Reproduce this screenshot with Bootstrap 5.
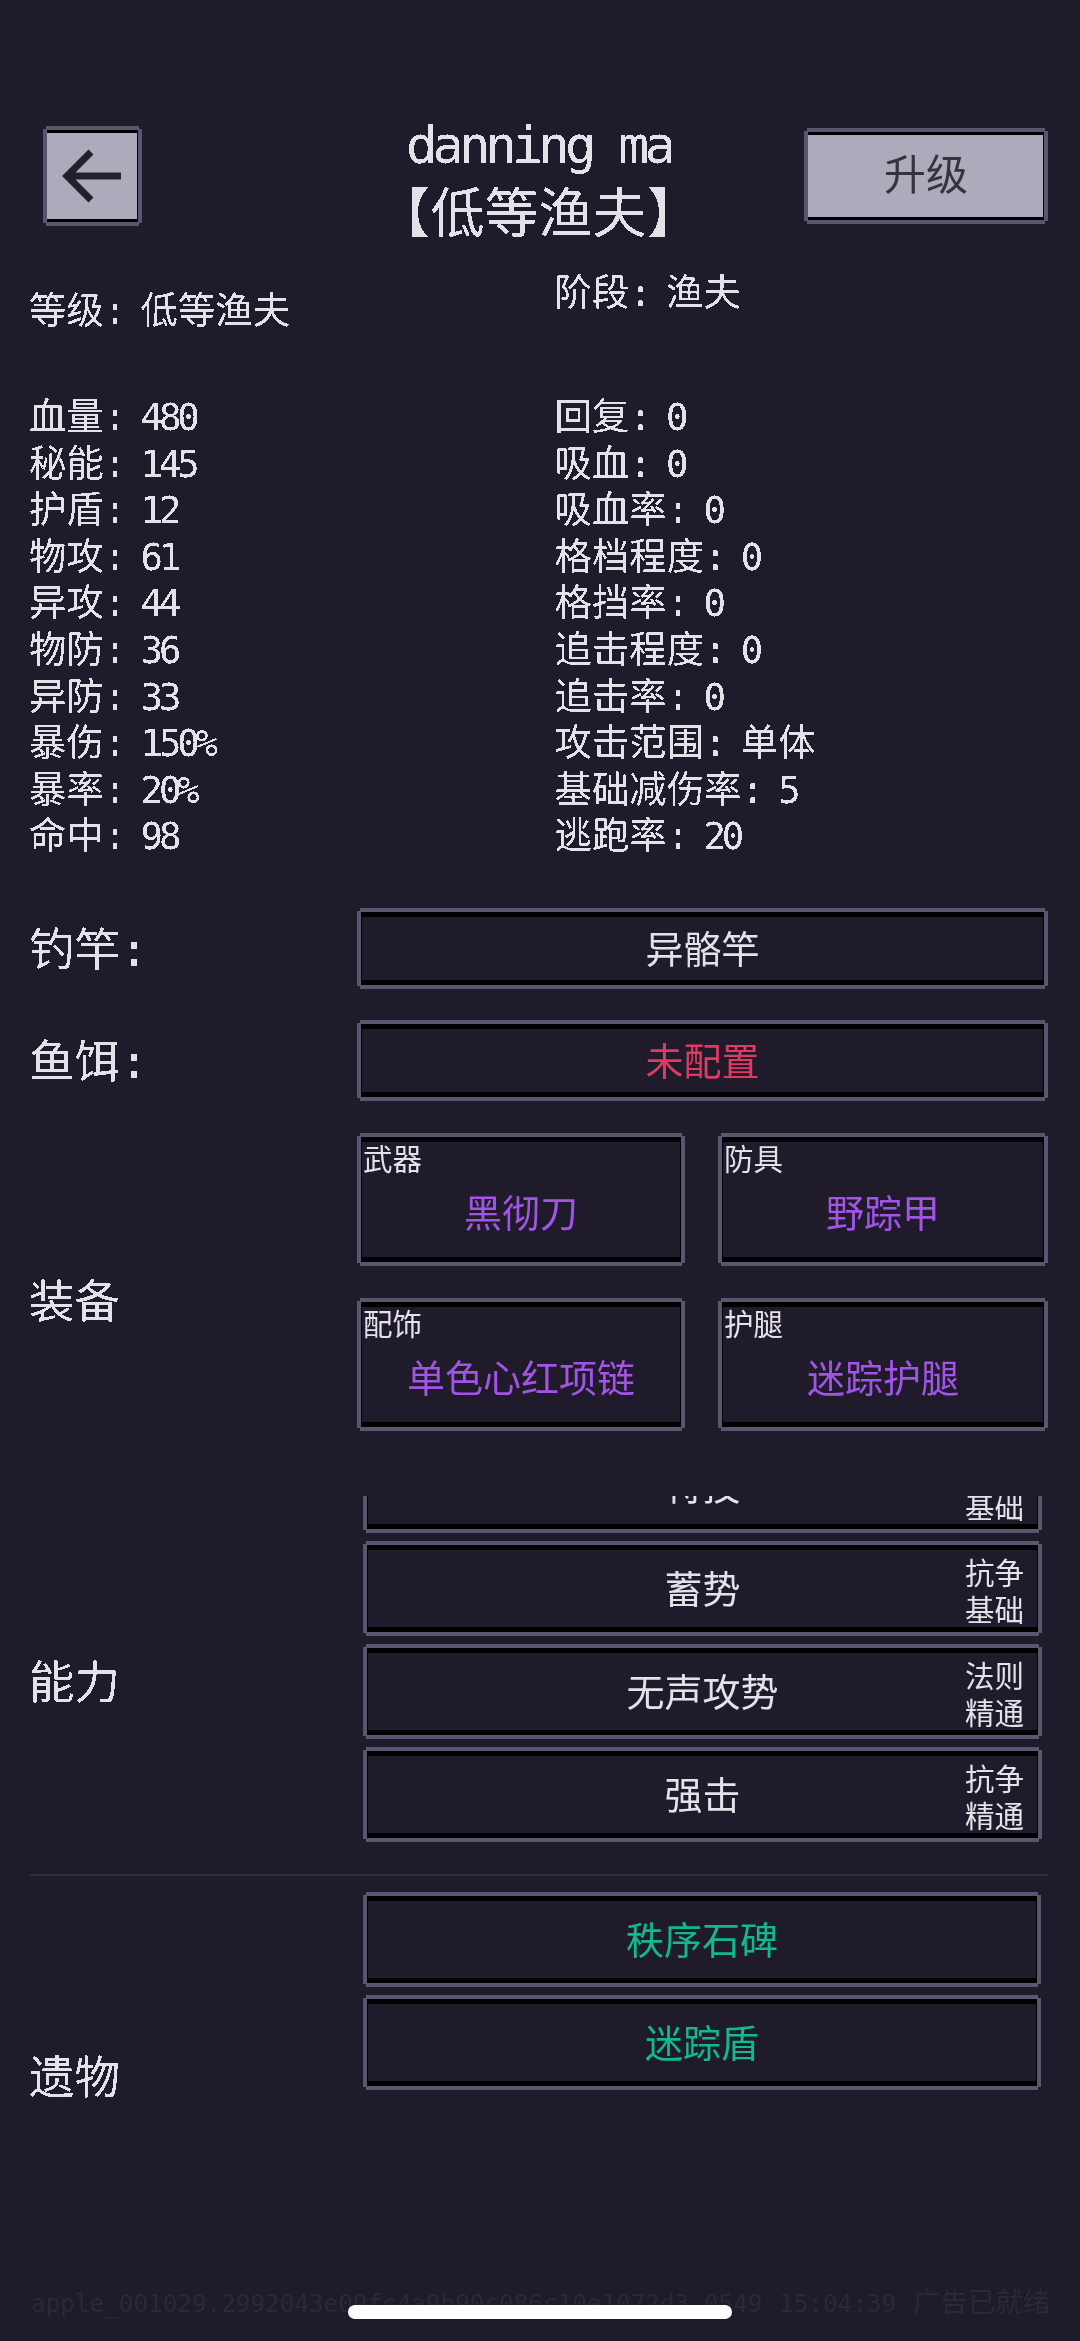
<!DOCTYPE html>
<html lang="zh-CN">
<head>
    <meta charset="UTF-8">
    <meta name="viewport" content="width=device-width, initial-scale=1.0">
    <title>角色</title>
    <link rel="stylesheet" href="https://cdn.jsdelivr.net/npm/bootstrap@5.3.0/dist/css/bootstrap.min.css">
    <style>
        body {
            background: #201b2a;
            color: #e4e1e8;
            font-family: "DejaVu Sans Mono", "Noto Sans CJK SC", monospace;
            font-size: 37.4px;
            min-height: 2341px;
        }
        .screen { height: 2341px; overflow: hidden; padding: 119px 32px 0 29px; filter: url(#pixelate); }
        .lat { letter-spacing: -4.15px; }

        .head-grid { display: grid; grid-template-columns: 1fr auto 1fr; }
        .back-btn { width: 99px; height: 100px; margin: 7px 0 0 14px; }
        .title-name { font-size: 52px; line-height: 52px; letter-spacing: -4.8px; }
        .title-rank { font-size: 54px; line-height: 60px; margin-top: 14px; }

        .level-row { margin-top: 21px; line-height: 37px; }
        .level-left { padding-top: 27px; }
        .level-right { padding-top: 9px; }
        .stat-row { line-height: 46.6px; margin-top: 64px; }

        .btn.pix-btn {
            --bs-btn-padding-x: 0;
            --bs-btn-padding-y: 0;
            display: flex;
            align-items: center;
            justify-content: center;
            padding-top: 3px;
            color: #e4e1e8;
            background: #201b2a;
            border: 4px solid #5b5670;
            border-radius: 0;
            font-family: inherit;
            font-size: 38px;
            line-height: 38px;
            box-shadow: inset 0 5px 0 #000, inset 0 -5px 0 #000, inset 1px 0 0 #000, inset -1px 0 0 #000;
            clip-path: polygon(3px 0, calc(100% - 3px) 0, calc(100% - 3px) 3px, 100% 3px, 100% calc(100% - 3px), calc(100% - 3px) calc(100% - 3px), calc(100% - 3px) 100%, 3px 100%, 3px calc(100% - 3px), 0 calc(100% - 3px), 0 3px, 3px 3px);
        }
        .btn.pix-btn.pix-light {
            background: #aeaabb;
            color: #37323f;
            padding-top: 0;
            box-shadow: inset 0 3px 0 #000, inset 0 -3px 0 #000, inset -1px 0 0 #000;
        }
        .btn.pix-btn.up-btn { width: 244px; height: 96px; margin-top: 9px; font-size: 42px; }
        .txt-purple { color: #a254e6; }
        .btn.pix-btn.txt-red { color: #e03a62; }
        .btn.pix-btn.txt-green { color: #12b98c; }

        .side-label { width: 328px; flex: none; font-size: 45.5px; line-height: 46px; }
        .side-label-sm { width: 334px; }
        .skill-label { padding-top: 4px; }
        .gear-label { padding-top: 42px; }
        .relic-label { margin-bottom: -4px; }
        .slot-row { height: 81px; }
        .slot-row .side-label { padding-top: 5px; }
        .slot-first { margin-top: 48px; }
        .slot-next { margin-top: 31px; }
        .gear-block { margin-top: 32px; }
        .gear-grid { display: grid; grid-template-columns: 328px 330px; column-gap: 33px; row-gap: 32px; }
        .btn.pix-btn.gear-slot { height: 133px; padding-top: 0; flex-direction: column; align-items: stretch; justify-content: flex-start; text-align: left; }
        .slot-tag { font-size: 29.5px; line-height: 30px; padding: 8px 0 0 2px; color: #e4e1e8; }
        .slot-name { text-align: center; margin-top: 20px; }

        .skill-block { margin-top: 65px; }
        .skill-window { height: 372px; overflow: hidden; width: 679px; }
        .skill-list { margin-top: -58px; }
        .btn.skill-btn { height: 95px; position: relative; width: 100%; }
        .skill-tag { position: absolute; right: 14px; top: 11px; font-size: 29.5px; line-height: 37px; text-align: center; }
        .rule { height: 2px; background: #322d3e; margin: 6px 0 0 1px; }
        .relic-btn { height: 95px; width: 678px; }

        .build-line {
            position: absolute;
            left: 31px;
            top: 2288px;
            color: #2c2836;
            font-size: 24.3px;
            line-height: 30px;
            word-spacing: 2px;
            white-space: nowrap;
        }
        .build-line b { font-weight: 400; font-size: 27.6px; }
        .home-bar { position: absolute; left: 348px; top: 2305px; width: 384px; height: 14px; border-radius: 7px; background: #fff; }
    </style>
</head>
<body>
    <svg width="0" height="0" class="position-absolute">
        <filter id="pixelate" color-interpolation-filters="sRGB">
            <feComponentTransfer><feFuncA type="discrete" tableValues="0 0 1 1"/></feComponentTransfer>
        </filter>
    </svg>

    <div class="screen">
        <div class="head-grid">
            <div>
                <button class="btn pix-btn pix-light back-btn" aria-label="返回">
                    <svg width="62" height="56" viewBox="0 0 62 56" fill="none" stroke="#231f2d" stroke-width="7">
                        <path d="M59 28H5M29 4 5 28l24 24"/>
                    </svg>
                </button>
            </div>
            <div class="text-center">
                <div class="title-name">danning ma</div>
                <div class="title-rank">【低等渔夫】</div>
            </div>
            <div class="d-flex justify-content-end">
                <button class="btn pix-btn pix-light up-btn">升级</button>
            </div>
        </div>

        <div class="row g-0 level-row">
            <div class="col-6 level-left">等级<span class="lat">: </span>低等渔夫</div>
            <div class="col-6 level-right ps-3">阶段<span class="lat">: </span>渔夫</div>
        </div>

        <div class="row g-0 stat-row">
            <div class="col-6" id="statsLeft"></div>
            <div class="col-6 ps-3" id="statsRight"></div>
        </div>

        <div class="d-flex align-items-center slot-row slot-first">
            <div class="side-label">钓竿<span class="lat">:</span></div>
            <button class="btn pix-btn flex-grow-1 h-100">异骼竿</button>
        </div>
        <div class="d-flex align-items-center slot-row slot-next">
            <div class="side-label">鱼饵<span class="lat">:</span></div>
            <button class="btn pix-btn txt-red flex-grow-1 h-100">未配置</button>
        </div>

        <div class="d-flex align-items-center gear-block">
            <div class="side-label gear-label">装备</div>
            <div class="gear-grid">
                <button class="btn pix-btn gear-slot"><div class="slot-tag">武器</div><div class="slot-name txt-purple">黑彻刀</div></button>
                <button class="btn pix-btn gear-slot"><div class="slot-tag">防具</div><div class="slot-name txt-purple">野踪甲</div></button>
                <button class="btn pix-btn gear-slot"><div class="slot-tag">配饰</div><div class="slot-name txt-purple">单色心红项链</div></button>
                <button class="btn pix-btn gear-slot"><div class="slot-tag">护腿</div><div class="slot-name txt-purple">迷踪护腿</div></button>
            </div>
        </div>

        <div class="d-flex align-items-center skill-block">
            <div class="side-label side-label-sm skill-label">能力</div>
            <div class="skill-window">
                <div class="skill-list d-flex flex-column gap-2" id="skillList"></div>
            </div>
        </div>
        <div class="rule"></div>

        <div class="d-flex align-items-end">
            <div class="side-label side-label-sm relic-label">遗物</div>
            <div class="d-flex flex-column gap-2 pt-3 pb-2">
                <button class="btn pix-btn txt-green relic-btn">秩序石碑</button>
                <button class="btn pix-btn txt-green relic-btn">迷踪盾</button>
            </div>
        </div>
    </div>

    <div class="build-line">apple_001029.2992043e09fc4a9b90c086c10e1072d3.0549 15:04:39 <b>广告已就绪</b></div>
    <div class="home-bar"></div>

    <script src="https://cdn.jsdelivr.net/npm/bootstrap@5.3.0/dist/js/bootstrap.bundle.min.js"></script>
    <script>
        const statsLeft = [["血量","480"],["秘能","145"],["护盾","12"],["物攻","61"],["异攻","44"],["物防","36"],["异防","33"],["暴伤","150%"],["暴率","20%"],["命中","98"]];
        const statsRight = [["回复","0"],["吸血","0"],["吸血率","0"],["格档程度","0"],["格挡率","0"],["追击程度","0"],["追击率","0"],["攻击范围","单体"],["基础减伤率","5"],["逃跑率","20"]];
        const skills = [["特技","抗争","基础"],["蓄势","抗争","基础"],["无声攻势","法则","精通"],["强击","抗争","精通"]];

        function statRows(list) {
            return list.map(s => {
                let val = /^[0-9%]+$/.test(s[1]) ? `<span class="lat">${s[1]}</span>` : s[1];
                return `<div>${s[0]}<span class="lat">: </span>${val}</div>`;
            }).join("");
        }

        document.getElementById("statsLeft").innerHTML = statRows(statsLeft);
        document.getElementById("statsRight").innerHTML = statRows(statsRight);
        document.getElementById("skillList").innerHTML = skills.map(s =>
            `<button class="btn pix-btn skill-btn">${s[0]}<span class="skill-tag">${s[1]}<br>${s[2]}</span></button>`
        ).join("");
    </script>
</body>
</html>
